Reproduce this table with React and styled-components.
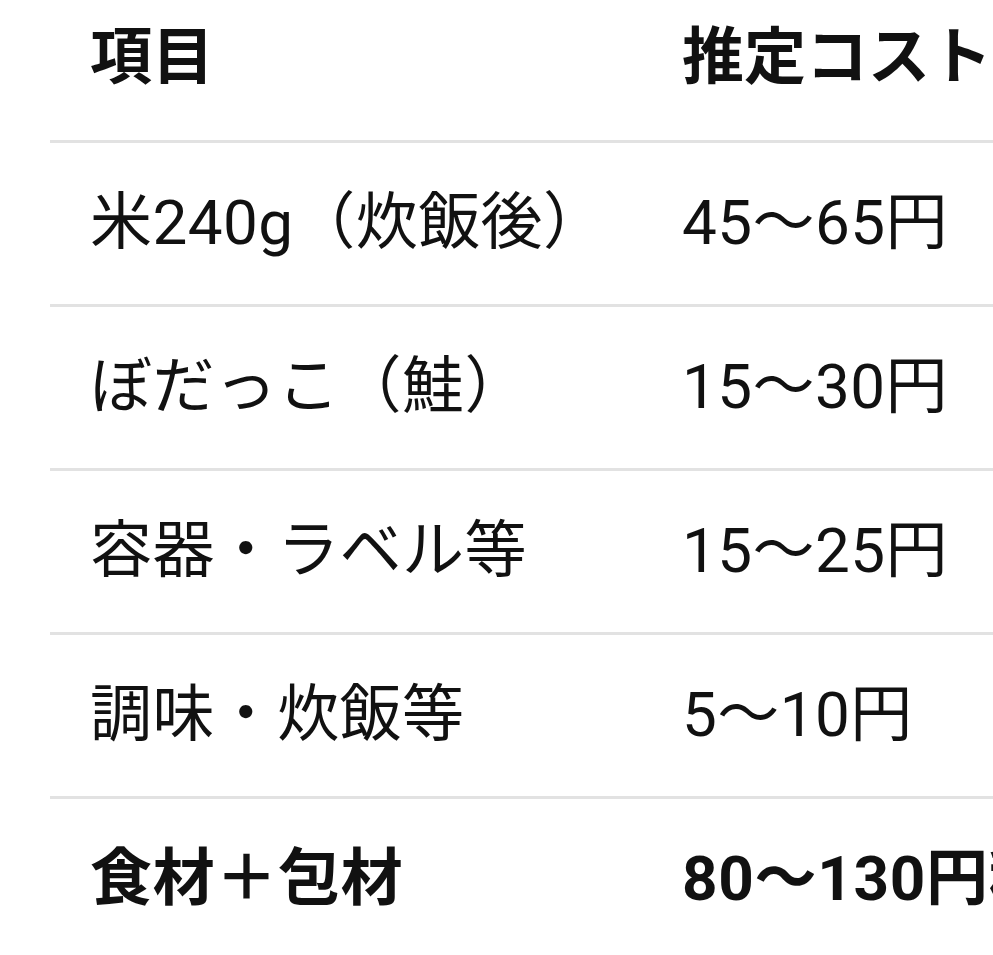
import React from "react";
import styled, { createGlobalStyle } from "styled-components";

const Global = createGlobalStyle`
  html, body { margin: 0; padding: 0; background: #ffffff; }
  body { overflow: hidden; }
  #root { width: 993px; height: 955px; overflow: hidden; }
`;

const Viewport = styled.div`
  width: 993px;
  height: 955px;
  overflow: hidden;
  background: #ffffff;
`;

const Table = styled.table`
  margin: -23px 0 0 50px;
  width: 1200px;
  border-collapse: collapse;
  table-layout: fixed;
  font-family: Roboto, "Noto Sans CJK JP", sans-serif;
  color: #111111;
`;

const Row = styled.tr`
  height: 164px;
  border-bottom: 3px solid #e2e2e2;
`;

const Cell = styled.td`
  padding: 0 0 0 40px;
  font-size: 62px;
  font-weight: ${(p) => (p.$bold ? 700 : 400)};
  letter-spacing: ${(p) => (p.$bold ? "0.7px" : "0.4px")};
  white-space: nowrap;
  vertical-align: middle;
  line-height: 1.2;
`;

const HeadCell = styled.th`
  padding: 0 0 0 40px;
  font-size: 62px;
  font-weight: 700;
  text-align: left;
  white-space: nowrap;
  vertical-align: middle;
  line-height: 1.2;
  width: ${(p) => p.$w || "auto"};
`;

const rows = [
  ["米240g（炊飯後）", "45〜65円"],
  ["ぼだっこ（鮭）", "15〜30円"],
  ["容器・ラベル等", "15〜25円"],
  ["調味・炊飯等", "5〜10円"],
];

export default function App() {
  return (
    <Viewport>
      <Global />
      <Table>
        <thead>
          <Row>
            <HeadCell $w="552px">項目</HeadCell>
            <HeadCell>推定コスト</HeadCell>
          </Row>
        </thead>
        <tbody>
          {rows.map(([a, b]) => (
            <Row key={a}>
              <Cell>{a}</Cell>
              <Cell>{b}</Cell>
            </Row>
          ))}
          <Row>
            <Cell $bold>食材＋包材</Cell>
            <Cell $bold>80〜130円程度</Cell>
          </Row>
        </tbody>
      </Table>
    </Viewport>
  );
}
